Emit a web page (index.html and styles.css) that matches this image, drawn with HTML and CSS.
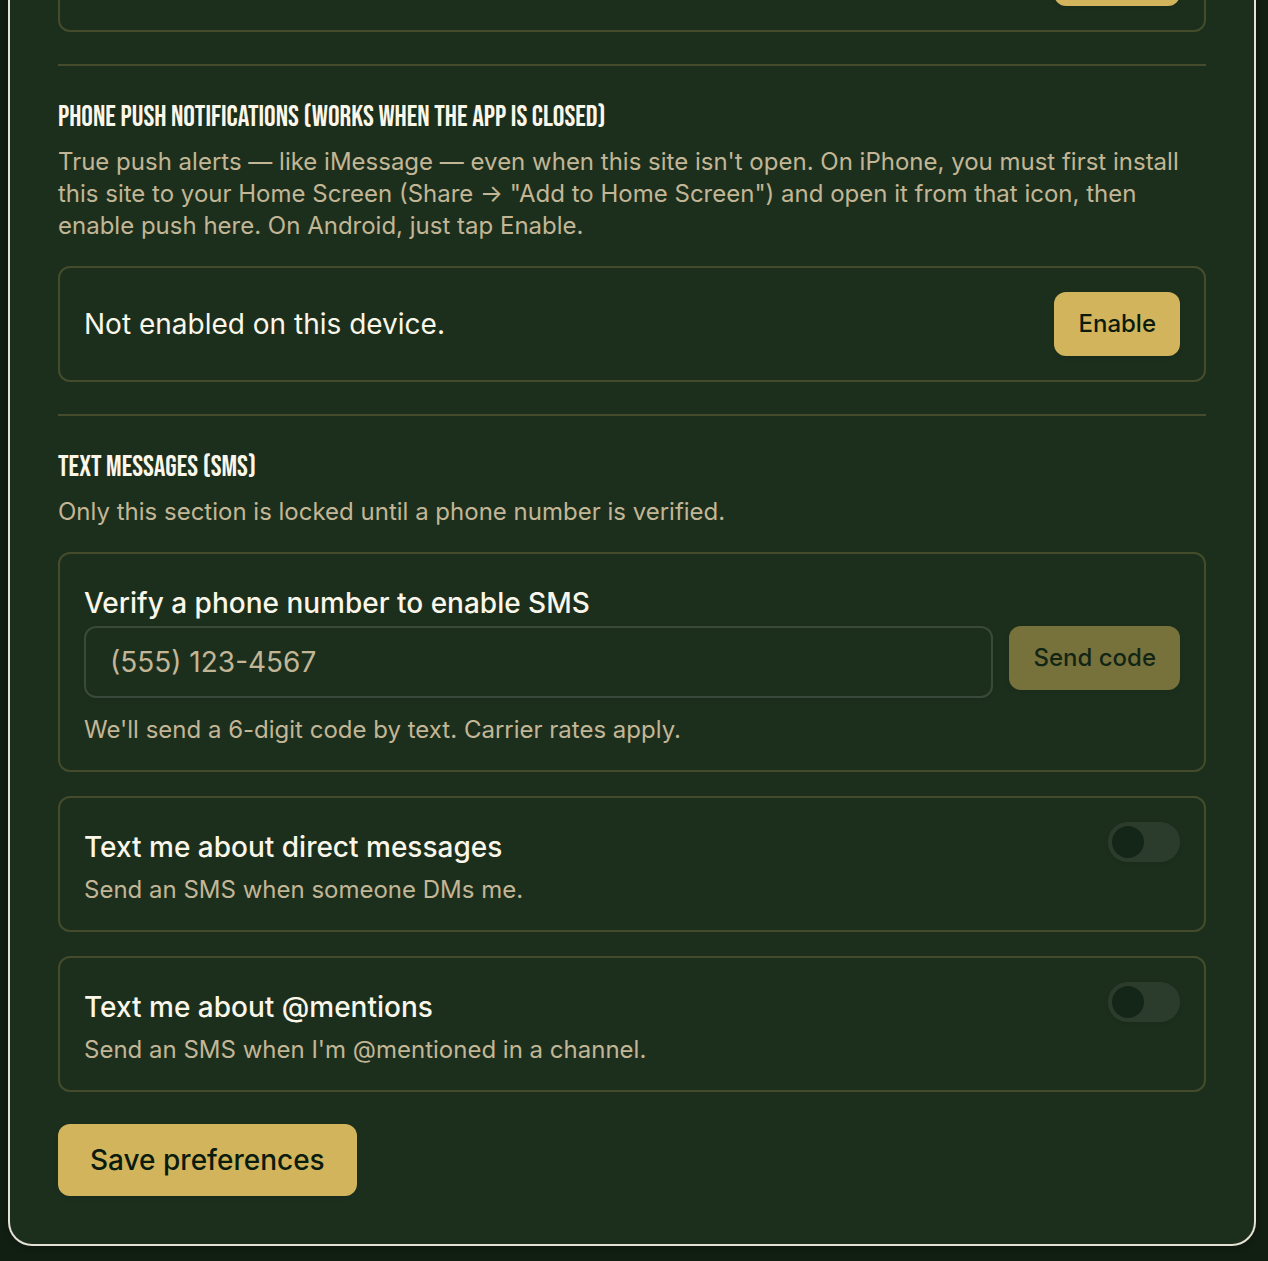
FILE: index.html
```html
<!DOCTYPE html>
<html lang="en">
<head>
<meta charset="utf-8">
<meta name="viewport" content="width=device-width, initial-scale=1">
<title>Notification preferences</title>
<link rel="stylesheet" href="styles.css">
</head>
<body>
<main class="page">
  <form class="panel">
    <div class="card card-row">
      <button type="button" class="btn btn-small btn-top" aria-label="Enable browser alerts"></button>
    </div>

    <section class="section">
      <h3 class="heading">Phone push notifications (works when the app is closed)</h3>
      <p class="muted">True push alerts — like iMessage — even when this site isn't open. On iPhone, you must first install this site to your Home Screen (Share → "Add to Home Screen") and open it from that icon, then enable push here. On Android, just tap Enable.</p>
      <div class="card card-row">
        <p class="status">Not enabled on this device.</p>
        <button type="button" class="btn btn-small">Enable</button>
      </div>
    </section>

    <section class="section">
      <h3 class="heading">Text messages (SMS)</h3>
      <p class="muted">Only this section is locked until a phone number is verified.</p>
      <div class="card">
        <div class="label-line"><label class="label" for="phone">Verify a phone number to enable SMS</label></div>
        <div class="phone-row">
          <input class="input" id="phone" type="tel" placeholder="(555) 123-4567">
          <button type="button" class="btn btn-small" disabled>Send code</button>
        </div>
        <p class="muted phone-help">We'll send a 6-digit code by text. Carrier rates apply.</p>
      </div>
      <div class="card card-toggle">
        <div class="toggle-text">
          <div class="label-line"><label class="label" for="sms-dm">Text me about direct messages</label></div>
          <p class="muted">Send an SMS when someone DMs me.</p>
        </div>
        <input class="switch" id="sms-dm" type="checkbox" role="switch" disabled>
      </div>
      <div class="card card-toggle">
        <div class="toggle-text">
          <div class="label-line"><label class="label" for="sms-mention">Text me about @mentions</label></div>
          <p class="muted">Send an SMS when I'm @mentioned in a channel.</p>
        </div>
        <input class="switch" id="sms-mention" type="checkbox" role="switch" disabled>
      </div>
    </section>

    <button type="submit" class="btn btn-save">Save preferences</button>
  </form>
</main>
</body>
</html>
```
FILE: styles.css
```css
:root {
  --page: #111e12;
  --panel: #1c2f1d;
  --cream: #faf6e9;
  --muted: #c3b696;
  --gold: #d2b45c;
  --ink: #0a1c0e;
  --line: #444c2b;
}

*, *::before, *::after { box-sizing: border-box; }

body {
  margin: 0;
  background: var(--page);
  color: var(--cream);
  font: 400 32px/48px Inter, "Liberation Sans", sans-serif;
}

h3, p { margin: 0; }

.page {
  overflow: hidden;
  padding: 0 12px 15px 8px;
}

/* The panel begins above the fold, as in a scrolled view. */
.panel {
  margin-top: -84px;
  padding: 0 48px 48px;
  border: 2px solid #e5e2d5;
  border-top: 0;
  border-radius: 0 0 24px 24px;
  background: var(--panel);
  box-shadow: 0 2px 6px rgb(0 0 0 / 20%);
}

.section {
  display: flex;
  flex-direction: column;
  gap: 24px;
  margin-top: 32px;
  padding-top: 32px;
  border-top: 2px solid var(--line);
}

.heading {
  margin-bottom: -16px;
  font: 600 29px/40px "Bebas Neue", "Roboto Condensed", "Liberation Sans Narrow", "Liberation Sans", sans-serif;
  text-transform: uppercase;
}

.muted {
  color: var(--muted);
  font-size: 24px;
  line-height: 32px;
}

.card {
  padding: 24px;
  border: 2px solid var(--line);
  border-radius: 12px;
}

.card-row {
  display: flex;
  align-items: center;
  justify-content: space-between;
  gap: 24px;
}

.card-toggle {
  display: flex;
  align-items: flex-start;
  justify-content: space-between;
  gap: 24px;
}

.toggle-text {
  display: flex;
  flex-direction: column;
  gap: 4px;
}

.status {
  font-size: 28px;
  line-height: 40px;
}

.label {
  font-size: 28px;
  font-weight: 500;
  line-height: 40px;
}

.phone-row {
  display: flex;
  align-items: flex-start;
  gap: 16px;
}

.phone-help { margin-top: 16px; }

.input {
  flex: 1;
  min-width: 0;
  height: 72px;
  padding: 0 24px;
  border: 2px solid #394a3a;
  border-radius: 12px;
  background: transparent;
  box-shadow: 0 2px 4px rgb(0 0 0 / 8%);
  color: var(--cream);
  font: inherit;
  font-size: 28px;
}

.input::placeholder {
  color: var(--muted);
  opacity: 1;
}

.btn {
  border: 0;
  border-radius: 12px;
  background: var(--gold);
  box-shadow: 0 2px 4px rgb(0 0 0 / 10%);
  color: var(--ink);
  font: inherit;
  font-weight: 500;
  white-space: nowrap;
}

.btn:disabled { opacity: 0.5; }

.btn-small {
  height: 64px;
  padding: 0 24px;
  font-size: 24px;
  line-height: 32px;
}

.btn-top {
  width: 126px;
  margin-left: auto;
}

.btn-save {
  display: block;
  height: 72px;
  margin-top: 32px;
  padding: 0 32px;
  font-size: 28px;
  line-height: 40px;
}

.switch {
  appearance: none;
  flex: none;
  width: 72px;
  height: 40px;
  margin: 0;
  padding: 4px;
  border-radius: 20px;
  background: #3a4a3c;
  box-shadow: 0 2px 4px rgb(0 0 0 / 10%);
}

.switch::before {
  content: "";
  display: block;
  width: 32px;
  height: 32px;
  border-radius: 50%;
  background: #0e1e14;
}

.switch:checked::before { margin-left: auto; }

.switch:disabled { opacity: 0.5; }
```
